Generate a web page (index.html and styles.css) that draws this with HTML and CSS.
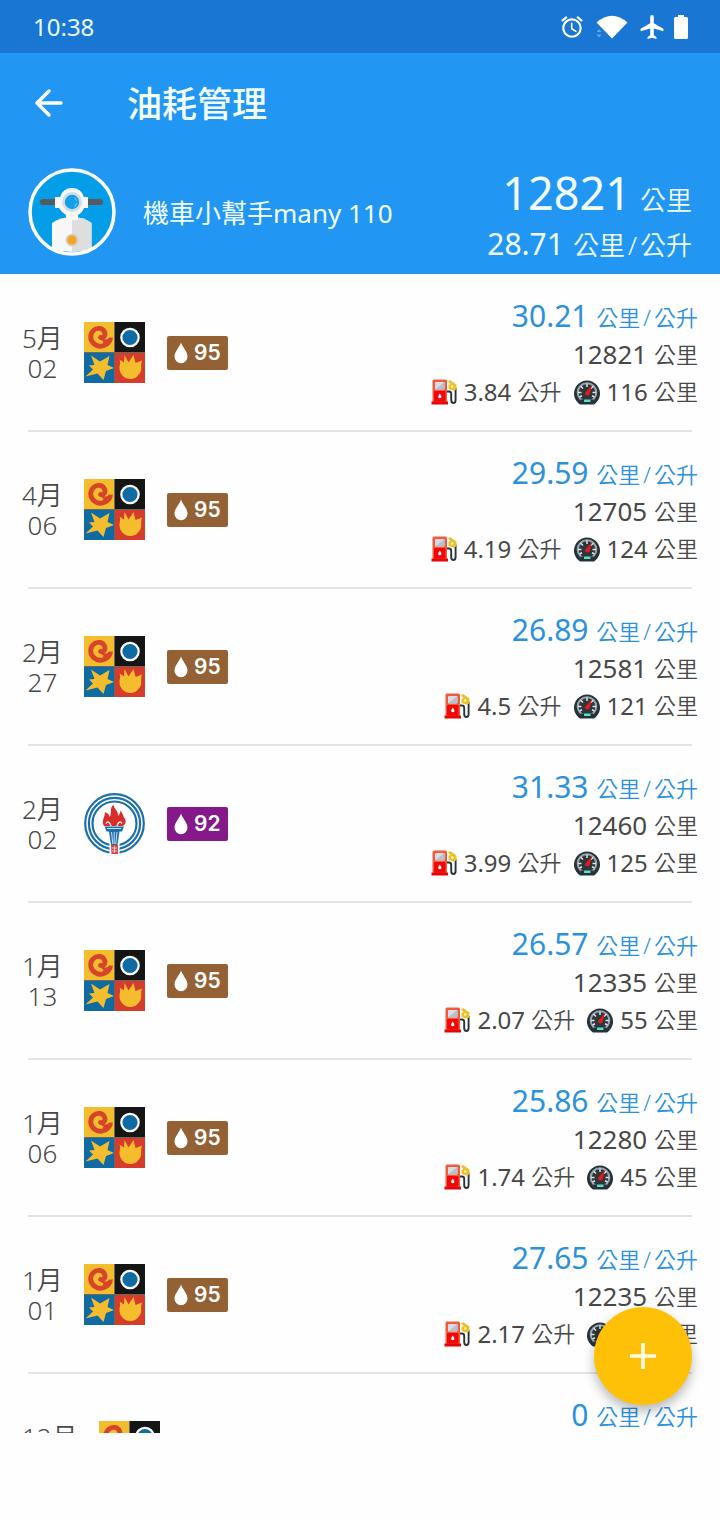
FILE: index.html
```html
<!DOCTYPE html>
<html lang="zh-Hant">
<head>
<meta charset="utf-8">
<meta name="viewport" content="width=device-width, initial-scale=1">
<title>油耗管理</title>
<link rel="stylesheet" href="styles.css">
</head>
<body>
<svg class="sprite" aria-hidden="true">
  <symbol id="cpc-squares" viewBox="0 0 61 61">
    <rect width="61" height="61" fill="#6b6a5a"/>
    <rect width="30" height="30" fill="#f3bd2d"/>
    <rect x="31" width="30" height="30" fill="#151515"/>
    <rect y="31" width="30" height="30" fill="#106ba3"/>
    <rect x="31" y="31" width="30" height="30" fill="#d63c2c"/>
    <path d="M26 18C23 24 16 26 11 22.500C5 18.500 6 11.500 9.500 8.500C13 5 19 6 20.500 10C22 13.500 19.500 16.500 16.500 15.500" fill="none" stroke="#d8432b" stroke-width="4.800" stroke-linecap="round"/>
    <path d="M16 13C17 18 22 19 28.800 15C28 21 25 24 21 25L17 17Z" fill="#d8432b"/>
    <path d="M13.500 12.500C12 15 13 19.500 18.500 20" fill="none" stroke="#f3bd2d" stroke-width="1.800" stroke-linecap="round"/>
    <circle cx="46" cy="15.500" r="8.700" fill="#106ba3" stroke="#fff" stroke-width="2.200"/>
    <path d="M7 33.500L16 39.500L25.500 34L23.500 43L30 46L22 49L19.500 58L13.500 51.500L1.500 54.500L9 47.500L5 43.500L10.500 43Z" fill="#f3bd2d"/>
    <path d="M40.500 33L44.500 40.500L49.500 33L51.500 41L58 38.500C56 44 58.500 47 56 51C53 55.500 50 57 46.500 57C40 57 35.500 52 35.500 46C35.500 43 37 41 35.500 37.500L40 40.500Z" fill="#f3bd2d"/>
  </symbol>
  <symbol id="torch-ring" viewBox="0 0 61 61">
    <g fill="none" stroke="#1d6fae" stroke-width="2.200">
      <circle cx="30.500" cy="30.500" r="29.300"/>
      <circle cx="30.500" cy="30.500" r="25.600"/>
      <circle cx="30.500" cy="30.500" r="22"/>
    </g>
    <rect x="25.500" y="50" width="10" height="11" fill="#fff"/>
    <path d="M20 33C17 27 21 25 21 19C24 20 25.500 22 25.500 24C28.500 21 25 15 29.500 11.500C29.500 16 34.500 17 34 23C36 21 36.500 19 36 17.500C39.500 21 39 23 41 26C43 30 40 32 39 33Z" fill="#d92d2a"/>
    <path d="M22 30.500C24 27 26 30 27 33M38 30.500C36 27 34 30 33 33" stroke="#fff" stroke-width="1.300" fill="none"/>
    <path d="M20.500 33.500H40L38 38.500H35.500L33.500 52H27L25 38.500H22.500Z" fill="#1d6fae"/>
    <path d="M23 35.500H37M27.500 39L28.800 51M30.200 39V51M33 39L31.800 51" stroke="#d9edf8" stroke-width=".900"/>
    <path d="M27 52H34L34 61H27.500Z" fill="#d94343"/>
    <path d="M28 55H33M28 58H33M30.500 53V60" stroke="#fff" stroke-width=".700"/>
  </symbol>
  <symbol id="drop" viewBox="0 0 14 22">
    <path d="M7 .500C6 4.500 .500 9.500 .500 14.500A6.500 6.700 0 0 0 13.500 14.500C13.500 9.500 8 4.500 7 .500Z" fill="#fff"/>
  </symbol>
  <symbol id="pump" viewBox="0 0 26 26">
    <path d="M16 12.500H18Q20.200 12.500 20.200 15V21Q20.200 24 22.400 24T24.600 21V9" fill="none" stroke="#28343b" stroke-width="1.900"/>
    <path d="M17 2.500L19 1L25.500 5.500V10.500L22 11.500L17.500 10V6L19.500 5Z" fill="#ecc02b"/>
    <circle cx="21.200" cy="7.500" r="1.300" fill="#fff7bd"/>
    <rect x="1.500" y=".500" width="14.500" height="23" rx="1.500" fill="#f25a3c"/>
    <rect x="4" y="3" width="9.500" height="7.500" rx="1" fill="#d8dde5"/>
    <path d="M4 10.500L13.500 3V9.500Q13.500 10.500 12.500 10.500Z" fill="#b8c0ca"/>
    <rect x="3" y="12" width="11.500" height="10.500" rx="1" fill="#f30605"/>
    <path d="M8.800 14.500C8.400 15.500 7.200 16.500 7.200 17.700A1.600 1.600 0 0 0 10.400 17.700C10.400 16.500 9.200 15.500 8.800 14.500Z" fill="#fff"/>
    <path d="M.500 22.500H17V25.500H.500Z" fill="#e60505"/>
  </symbol>
  <symbol id="gauge" viewBox="0 0 26 26">
    <path d="M6 25.500A13 13 0 1 1 20 25.500Z" fill="#26323a"/>
    <circle cx="13" cy="13.500" r="9.300" fill="#2b363d" stroke="#9aa5ab" stroke-width="2"/>
    <path d="M6.500 20.500H19.500V25H6.500Z" fill="#26323a"/>
    <path d="M13 4.500V8M4 13.500H7.500M18.500 13.500H22M6.700 7.200L9 9.500M19.300 7.200L17 9.500M5.500 18L8 16.800M20.500 18L18 16.800" stroke="#dfe5e8" stroke-width="1.500"/>
    <path d="M18 6L15.500 15.500Q13 17.800 10.600 14.500Z" fill="#e51a1a"/>
    <rect x="10" y="20.500" width="6.500" height="2.600" rx=".600" fill="#5ce0bd"/>
  </symbol>
</svg>

<div class="screen">
  <div class="status-bar">
    <time class="clock">10:38</time>
    <div class="status-icons" aria-hidden="true">
      <svg class="ico-alarm" viewBox="0 0 24 24"><path d="M22 5.720l-4.600-3.860-1.290 1.530 4.600 3.860L22 5.720zM7.880 3.390L6.600 1.860 2 5.710l1.290 1.530 4.590-3.850zM12.500 8H11v6l4.750 2.850.750-1.230-4-2.370V8zM12 4c-4.970 0-9 4.030-9 9s4.020 9 9 9a9 9 0 0 0 0-18zm0 16c-3.870 0-7-3.130-7-7s3.130-7 7-7 7 3.130 7 7-3.130 7-7 7z" fill="#fff"/></svg>
      <svg class="ico-wifi" viewBox="0 0 32 24"><path d="M.500 7.500Q16-6 31.500 7.500L16 23.500Z" fill="#fff"/><path d="M.500 17L3 14L5.500 17ZM.500 19.500H5.500L3 22.500Z" fill="#67a8ea"/></svg>
      <svg class="ico-plane" viewBox="2 2 20 20"><path d="M21.500 15.500v-2l-8-4.700V3.500a1.500 1.500 0 0 0-3 0v5.300l-8 4.700v2l8-2.200V18.800l-2.200 1.600V22L12 21l3.700 1v-1.600l-2.200-1.600v-5.500z" fill="#fff"/></svg>
      <svg class="ico-battery" viewBox="0 0 14 24"><path d="M4 0H10V2H12.500Q14 2 14 3.500V22.500Q14 24 12.500 24H1.500Q0 24 0 22.500V3.500Q0 2 1.500 2H4Z" fill="#fff"/></svg>
    </div>
  </div>

  <header class="header">
    <div class="toolbar">
      <button class="back" type="button" aria-label="返回">
        <svg viewBox="0 0 28 28"><path d="M14 2L2 14L14 26M2 14H26" fill="none" stroke="#fff" stroke-width="3.400" stroke-linecap="round" stroke-linejoin="round"/></svg>
      </button>
      <h1 class="title">油耗管理</h1>
    </div>
    <div class="vehicle">
      <svg class="avatar" viewBox="0 0 88 88" aria-hidden="true">
        <clipPath id="disc"><circle cx="44" cy="44" r="41"/></clipPath>
        <circle cx="44" cy="44" r="42" fill="#049ee8"/>
        <g clip-path="url(#disc)">
          <rect x="12" y="31" width="63" height="6" rx="2.500" fill="#555b60"/>
          <path d="M24 55Q32 49 44 49T63.500 55V81Q54 84 44 84T24 81Z" fill="#f7f7f7"/>
          <path d="M44 49Q56 49 63.500 55V81Q54 84 44 84Z" fill="#dedede"/>
          <path d="M27 29H32Q35 20 44 20T56 29H60V40H56Q54 45 50 47V52H38V47Q34 45 31 40H27Z" fill="#f7f7f7"/>
          <circle cx="44" cy="34" r="10" fill="#d2dce1"/>
          <circle cx="44" cy="34" r="7.200" fill="#14a0e6"/>
          <path d="M46 28.500Q52 34 46 39.500L49 34Z" fill="#c7eefe"/>
          <circle cx="44" cy="72" r="6.300" fill="#d2cec5"/>
          <circle cx="44" cy="72" r="4.500" fill="#f5a51e"/>
        </g>
        <circle cx="44" cy="44" r="42" fill="none" stroke="#fff" stroke-width="3.500"/>
      </svg>
      <p class="vehicle-name">機車小幫手many 110</p>
      <div class="totals">
        <p class="total total-main"><span class="num">12821</span><span class="unit">公里</span></p>
        <p class="total"><span class="num">28.71</span><span class="unit">公里<span class="per">/</span>公升</span></p>
      </div>
    </div>
  </header>

  <main class="list-pane">
    <ul class="list">
      <li class="entry">
        <div class="entry-body">
          <time class="date">5月<br>02</time>
          <svg class="brand"><use href="#cpc-squares"/></svg>
          <span class="grade grade-95"><svg><use href="#drop"/></svg>95</span>
          <div class="stats">
            <p class="economy">30.21 <span class="unit">公里<span class="per">/</span>公升</span></p>
            <p class="odometer">12821 <span class="unit">公里</span></p>
            <p class="detail"><svg><use href="#pump"/></svg><span>3.84 <span class="unit">公升</span></span><svg class="gauge"><use href="#gauge"/></svg><span>116 <span class="unit">公里</span></span></p>
          </div>
        </div>
      </li>
      <li class="entry">
        <div class="entry-body">
          <time class="date">4月<br>06</time>
          <svg class="brand"><use href="#cpc-squares"/></svg>
          <span class="grade grade-95"><svg><use href="#drop"/></svg>95</span>
          <div class="stats">
            <p class="economy">29.59 <span class="unit">公里<span class="per">/</span>公升</span></p>
            <p class="odometer">12705 <span class="unit">公里</span></p>
            <p class="detail"><svg><use href="#pump"/></svg><span>4.19 <span class="unit">公升</span></span><svg class="gauge"><use href="#gauge"/></svg><span>124 <span class="unit">公里</span></span></p>
          </div>
        </div>
      </li>
      <li class="entry">
        <div class="entry-body">
          <time class="date">2月<br>27</time>
          <svg class="brand"><use href="#cpc-squares"/></svg>
          <span class="grade grade-95"><svg><use href="#drop"/></svg>95</span>
          <div class="stats">
            <p class="economy">26.89 <span class="unit">公里<span class="per">/</span>公升</span></p>
            <p class="odometer">12581 <span class="unit">公里</span></p>
            <p class="detail"><svg><use href="#pump"/></svg><span>4.5 <span class="unit">公升</span></span><svg class="gauge"><use href="#gauge"/></svg><span>121 <span class="unit">公里</span></span></p>
          </div>
        </div>
      </li>
      <li class="entry">
        <div class="entry-body">
          <time class="date">2月<br>02</time>
          <svg class="brand"><use href="#torch-ring"/></svg>
          <span class="grade grade-92"><svg><use href="#drop"/></svg>92</span>
          <div class="stats">
            <p class="economy">31.33 <span class="unit">公里<span class="per">/</span>公升</span></p>
            <p class="odometer">12460 <span class="unit">公里</span></p>
            <p class="detail"><svg><use href="#pump"/></svg><span>3.99 <span class="unit">公升</span></span><svg class="gauge"><use href="#gauge"/></svg><span>125 <span class="unit">公里</span></span></p>
          </div>
        </div>
      </li>
      <li class="entry">
        <div class="entry-body">
          <time class="date">1月<br>13</time>
          <svg class="brand"><use href="#cpc-squares"/></svg>
          <span class="grade grade-95"><svg><use href="#drop"/></svg>95</span>
          <div class="stats">
            <p class="economy">26.57 <span class="unit">公里<span class="per">/</span>公升</span></p>
            <p class="odometer">12335 <span class="unit">公里</span></p>
            <p class="detail"><svg><use href="#pump"/></svg><span>2.07 <span class="unit">公升</span></span><svg class="gauge"><use href="#gauge"/></svg><span>55 <span class="unit">公里</span></span></p>
          </div>
        </div>
      </li>
      <li class="entry">
        <div class="entry-body">
          <time class="date">1月<br>06</time>
          <svg class="brand"><use href="#cpc-squares"/></svg>
          <span class="grade grade-95"><svg><use href="#drop"/></svg>95</span>
          <div class="stats">
            <p class="economy">25.86 <span class="unit">公里<span class="per">/</span>公升</span></p>
            <p class="odometer">12280 <span class="unit">公里</span></p>
            <p class="detail"><svg><use href="#pump"/></svg><span>1.74 <span class="unit">公升</span></span><svg class="gauge"><use href="#gauge"/></svg><span>45 <span class="unit">公里</span></span></p>
          </div>
        </div>
      </li>
      <li class="entry">
        <div class="entry-body">
          <time class="date">1月<br>01</time>
          <svg class="brand"><use href="#cpc-squares"/></svg>
          <span class="grade grade-95"><svg><use href="#drop"/></svg>95</span>
          <div class="stats">
            <p class="economy">27.65 <span class="unit">公里<span class="per">/</span>公升</span></p>
            <p class="odometer">12235 <span class="unit">公里</span></p>
            <p class="detail"><svg><use href="#pump"/></svg><span>2.17 <span class="unit">公升</span></span><svg class="gauge"><use href="#gauge"/></svg><span>55 <span class="unit">公里</span></span></p>
          </div>
        </div>
      </li>
      <li class="entry">
        <div class="entry-body">
          <time class="date">12月</time>
          <svg class="brand"><use href="#cpc-squares"/></svg>
          <div class="stats">
            <p class="economy">0 <span class="unit">公里<span class="per">/</span>公升</span></p>
          </div>
        </div>
      </li>
    </ul>
  </main>
  <button class="fab" type="button" aria-label="新增">
    <svg viewBox="0 0 26 26"><path d="M13 0V26M0 13H26" stroke="#fffbe6" stroke-width="3.600"/></svg>
  </button>
</div>
</body>
</html>
```
FILE: styles.css
```css
* { box-sizing: border-box; }

body {
  margin: 0;
  background: #fefefe;
  color: #484848;
  font-family: "Noto Sans", "Noto Sans CJK TC", sans-serif;
  font-size: 26px;
}

h1, p, ul { margin: 0; padding: 0; }

svg { display: block; flex: none; }

button { border: 0; padding: 0; cursor: pointer; }

.sprite { position: absolute; width: 0; height: 0; }

.screen {
  position: relative;
  display: flex;
  flex-direction: column;
  height: 100vh;
  padding-bottom: 87px;
}

.status-bar {
  display: flex;
  flex: none;
  align-items: center;
  justify-content: space-between;
  height: 53px;
  padding: 0 32px 0 33px;
  background: #1976d2;
  color: #e9fcff;
}

.clock { font-size: 24px; line-height: 32px; }

.status-icons { display: flex; align-items: center; }
.ico-alarm { width: 26px; height: 26px; margin-right: 11px; }
.ico-wifi { width: 32px; height: 24px; margin-right: 12px; }
.ico-plane { width: 24px; height: 24px; margin-right: 10px; }
.ico-battery { width: 14px; height: 24px; }

.header {
  flex: none;
  padding: 20px 28px 16px;
  background: #2196f3;
  color: #f2feff;
}

.toolbar {
  display: flex;
  align-items: center;
  gap: 64px;
  height: 60px;
  padding-left: 7px;
}

.back { background: none; }
.back svg { width: 28px; height: 28px; }

.title { padding-top: 2px; font-size: 35px; font-weight: 500; line-height: 48px; }

.vehicle {
  display: flex;
  align-items: center;
  height: 125px;
  padding-top: 33px;
}

.avatar { width: 88px; height: 88px; margin-right: 27px; }

.vehicle-name { flex: 1; padding-top: 2px; line-height: 36px; }

.total {
  display: flex;
  align-items: baseline;
  justify-content: flex-end;
  gap: 9px;
  line-height: 38px;
}

.total .num { font-size: 30px; }
.total-main { line-height: 64px; }
.total-main .num { font-size: 45px; }

.unit { font-weight: 350; line-height: 1; }
.per { padding: 0 3px; }

.list-pane { flex: 1; min-height: 0; overflow: hidden; }

.list { list-style: none; padding-top: 1px; }

.entry::after {
  content: "";
  display: block;
  height: 2px;
  margin: 0 28px;
  background: #e3e3e3;
}

.entry-body {
  display: flex;
  align-items: center;
  min-height: 155px;
  padding: 0 22px;
}

.date {
  min-height: 60px;
  margin-right: 21px;
  font-weight: 350;
  line-height: 30px;
  text-align: center;
}

.brand { width: 61px; height: 61px; margin-right: 22px; }

.grade {
  display: flex;
  align-items: center;
  justify-content: center;
  gap: 6px;
  width: 61px;
  height: 34px;
  border-radius: 2px;
  color: #fff;
  font: 600 21px/34px Inter, sans-serif;
}

.grade svg { width: 14px; height: 22px; }
.grade-95 { background: #946134; }
.grade-92 { background: #85198a; }

.stats {
  flex: 1;
  min-height: 120px;
  padding-top: 4px;
  text-align: right;
  line-height: 38px;
}

.stats .unit { font-size: 22px; vertical-align: 1px; }
.economy { color: #2b91dc; font-size: 30px; }

.detail {
  display: flex;
  align-items: center;
  justify-content: flex-end;
  gap: 7px;
  font-size: 24px;
}

.detail svg { width: 26px; height: 26px; }
.detail .gauge { margin-left: 5px; }

.fab {
  position: absolute;
  right: 28px;
  bottom: 115px;
  display: grid;
  place-items: center;
  width: 98px;
  height: 98px;
  border-radius: 50%;
  background: #ffc107;
  box-shadow: 0 6px 12px rgba(0, 0, 0, .28);
}

.fab svg { width: 26px; height: 26px; }
```
